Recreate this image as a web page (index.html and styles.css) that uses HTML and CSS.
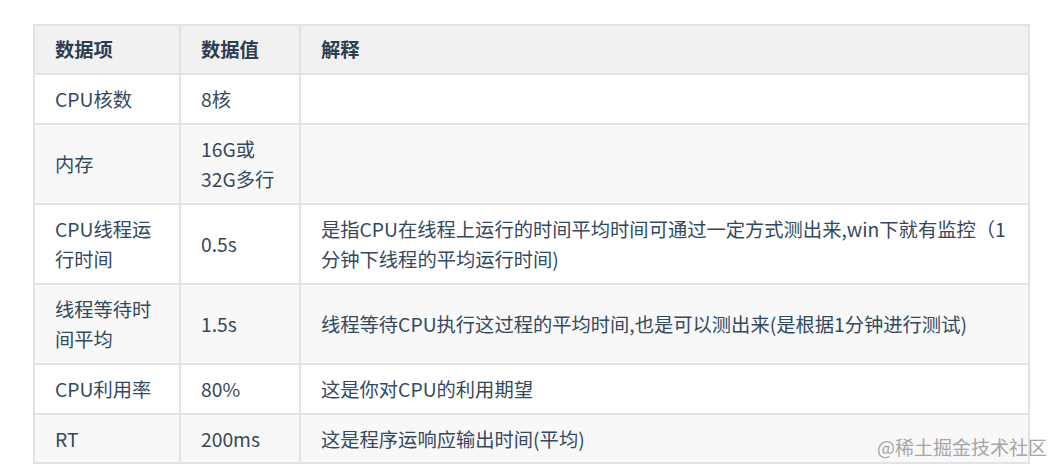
FILE: index.html
```html
<!DOCTYPE html>
<html lang="zh-CN">
<head>
<meta charset="utf-8">
<link rel="stylesheet" href="styles.css">
</head>
<body>
<div class="page">
  <table class="data-table">
    <colgroup>
      <col class="c1">
      <col class="c2">
      <col class="c3">
    </colgroup>
    <thead>
      <tr><th>数据项</th><th>数据值</th><th>解释</th></tr>
    </thead>
    <tbody>
      <tr><td>CPU核数</td><td>8核</td><td></td></tr>
      <tr><td>内存</td><td>16G或32G多行</td><td></td></tr>
      <tr><td>CPU线程运行时间</td><td>0.5s</td><td>是指CPU在线程上运行的时间平均时间可通过一定方式测出来,win下就有监控（1分钟下线程的平均运行时间)</td></tr>
      <tr><td>线程等待时间平均</td><td>1.5s</td><td>线程等待CPU执行这过程的平均时间,也是可以测出来(是根据1分钟进行测试)</td></tr>
      <tr><td>CPU利用率</td><td>80%</td><td>这是你对CPU的利用期望</td></tr>
      <tr class="last"><td>RT</td><td>200ms</td><td>这是程序运响应输出时间(平均)</td></tr>
    </tbody>
  </table>
  <div class="watermark">@稀土掘金技术社区</div>
</div>
</body>
</html>
```
FILE: styles.css
```css
html, body {
  margin: 0;
  padding: 0;
  background: #ffffff;
}
body {
  font-family: "Noto Sans CJK SC", "Noto Sans", sans-serif;
  color: #34495e;
}
.page {
  position: relative;
  width: 1063px;
  height: 472px;
  overflow: hidden;
  padding: 24px 0 0 33px;
  box-sizing: border-box;
}
.data-table {
  border-collapse: collapse;
  width: 997px;
  table-layout: fixed;
  font-size: 19.3px;
  line-height: 30px;
}
.c1 { width: 146px; }
.c2 { width: 120px; }
.data-table th,
.data-table td {
  border: 2px solid #e1e3e4;
  padding: 9px 20px;
  text-align: left;
  vertical-align: middle;
}
.data-table th {
  background: #f1f1f1;
  color: #2c3e50;
  font-weight: 700;
  padding-top: 8px;
  padding-bottom: 9px;
}
.data-table tbody tr:nth-child(even) td {
  background: #f8f8f8;
}
.data-table tbody tr:nth-child(odd) td {
  background: #ffffff;
}
.data-table tbody tr.last td {
  padding-bottom: 8px;
}
.watermark {
  position: absolute;
  right: 16px;
  top: 434px;
  font-size: 19px;
  line-height: 26px;
  color: #a6a6a6;
  font-family: "Noto Sans CJK SC", sans-serif;
}
```
